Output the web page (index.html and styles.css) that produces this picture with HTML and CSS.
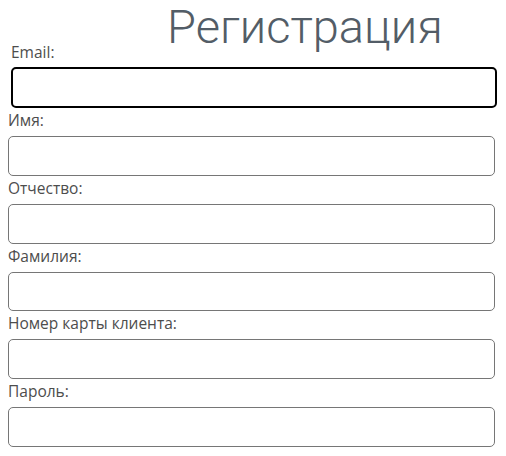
FILE: index.html
```html
<!DOCTYPE html>
<html lang="ru">
<head>
<meta charset="utf-8">
<title>Регистрация</title>
<link rel="stylesheet" href="styles.css">
</head>
<body>
<form class="form">
  <h1 class="title">Регистрация</h1>
  <div class="field field-first">
    <label class="label" for="email">Email:</label>
    <input class="input input-focus" id="email" type="text">
  </div>
  <div class="field">
    <label class="label" for="name">Имя:</label>
    <input class="input" id="name" type="text">
  </div>
  <div class="field">
    <label class="label" for="patronymic">Отчество:</label>
    <input class="input" id="patronymic" type="text">
  </div>
  <div class="field">
    <label class="label" for="surname">Фамилия:</label>
    <input class="input" id="surname" type="text">
  </div>
  <div class="field">
    <label class="label" for="card">Номер карты клиента:</label>
    <input class="input" id="card" type="text">
  </div>
  <div class="field">
    <label class="label" for="password">Пароль:</label>
    <input class="input" id="password" type="password">
  </div>
</form>
</body>
</html>
```
FILE: styles.css
```css
html, body {
  background: #ffffff;
}
body {
  margin: 8px;
  font-family: "Open Sans", "Liberation Sans", sans-serif;
  color: #4d4d4d;
}
.form {
  display: flex;
  flex-direction: column;
}
.title {
  margin: -9px 0 -11px 0;
  padding-left: 159px;
  font-family: Roboto, "Liberation Sans", sans-serif;
  font-size: 47px;
  font-weight: 300;
  line-height: normal;
  color: #535d67;
}
.field {
  display: flex;
  flex-direction: column;
  align-items: flex-start;
}
.field-first {
  margin-left: 3px;
}
.label {
  display: block;
  font-size: 15.5px;
  font-weight: 400;
  line-height: 18px;
  margin-top: 3px;
  margin-bottom: 7px;
}
.field-first .label {
  margin-top: 0;
  margin-bottom: 6px;
}
.input {
  box-sizing: border-box;
  width: 487px;
  height: 39.75px;
  margin: 0;
  border: 1px solid #767676;
  border-radius: 5px;
  background: #ffffff;
  font: inherit;
  outline: none;
}
.input-focus {
  width: 486px;
  height: 41px;
  border: 2px solid #000000;
}
```
